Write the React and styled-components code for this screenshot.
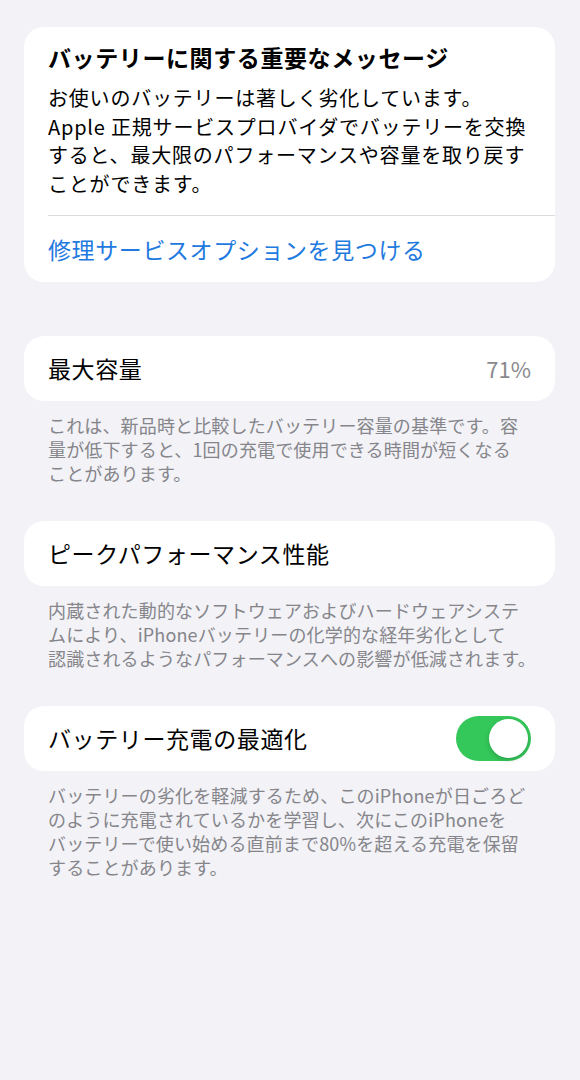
import React from 'react';
import styled, { createGlobalStyle } from 'styled-components';

const GlobalStyle = createGlobalStyle`
  html, body {
    margin: 0;
    padding: 0;
    background: #f2f2f7;
  }
  body {
    font-family: "Noto Sans CJK JP", "Noto Sans", sans-serif;
    -webkit-font-smoothing: antialiased;
  }
`;

const Page = styled.div`
  width: 580px;
  min-height: 1080px;
  box-sizing: border-box;
  padding: 27px 25px 0 24px;
  background: #f2f2f7;
`;

const Card = styled.div`
  background: #ffffff;
  border-radius: 20px;
  overflow: hidden;
  margin-top: ${p => p.$top || 0}px;
`;

const Notice = styled.div`
  padding: 15px 24px 16px 24px;
`;

const NoticeTitle = styled.div`
  font-size: 23px;
  font-weight: 700;
  line-height: 30px;
  letter-spacing: 0.6px;
  color: #000;
  white-space: nowrap;
`;

const NoticeBody = styled.div`
  margin-top: 12px;
  font-size: 20px;
  line-height: 28.7px;
  letter-spacing: 0.8px;
  color: #000;
  white-space: nowrap;
`;

const Divider = styled.div`
  height: 1px;
  background: #dcdce0;
  margin-left: 24px;
`;

const LinkRow = styled.div`
  height: 66px;
  display: flex;
  align-items: center;
  padding: 0 24px;
  font-size: 23px;
  letter-spacing: 0.6px;
  color: #1f7ae0;
`;

const Row = styled.div`
  height: 65px;
  display: flex;
  align-items: center;
  justify-content: space-between;
  padding: 0 24px;
`;

const Label = styled.span`
  font-size: 23px;
  letter-spacing: 0.6px;
  color: #000;
`;

const Value = styled.span`
  font-size: 22px;
  color: #8a8a8e;
`;

const Footnote = styled.div`
  padding: 12px 24px 0 24px;
  margin-bottom: 35px;
  font-size: 18px;
  line-height: 24.3px;
  letter-spacing: 0.15px;
  color: #85858a;
  white-space: nowrap;
`;

const Toggle = styled.div`
  width: 75px;
  height: 45px;
  border-radius: 23px;
  background: ${p => (p.$on ? '#34c759' : '#e9e9eb')};
  display: flex;
  align-items: center;
  justify-content: ${p => (p.$on ? 'flex-end' : 'flex-start')};
  padding: 0 3px;
  box-sizing: border-box;
`;

const Knob = styled.div`
  width: 39px;
  height: 39px;
  border-radius: 50%;
  background: #fff;
  box-shadow: 0 2px 5px rgba(0, 0, 0, 0.18);
`;

export default function App() {
  return (
    <Page>
      <GlobalStyle />
      <Card>
        <Notice>
          <NoticeTitle>バッテリーに関する重要なメッセージ</NoticeTitle>
          <NoticeBody>
            お使いのバッテリーは著しく劣化しています。<br />
            Apple 正規サービスプロバイダでバッテリーを交換<br />
            すると、最大限のパフォーマンスや容量を取り戻す<br />
            ことができます。
          </NoticeBody>
        </Notice>
        <Divider />
        <LinkRow>修理サービスオプションを見つける</LinkRow>
      </Card>

      <Card $top={54}>
        <Row>
          <Label>最大容量</Label>
          <Value>71%</Value>
        </Row>
      </Card>
      <Footnote>
        これは、新品時と比較したバッテリー容量の基準です。容<br />
        量が低下すると、1回の充電で使用できる時間が短くなる<br />
        ことがあります。
      </Footnote>

      <Card>
        <Row>
          <Label>ピークパフォーマンス性能</Label>
        </Row>
      </Card>
      <Footnote>
        内蔵された動的なソフトウェアおよびハードウェアシステ<br />
        ムにより、iPhoneバッテリーの化学的な経年劣化として<br />
        認識されるようなパフォーマンスへの影響が低減されます。
      </Footnote>

      <Card>
        <Row>
          <Label>バッテリー充電の最適化</Label>
          <Toggle $on>
            <Knob />
          </Toggle>
        </Row>
      </Card>
      <Footnote>
        バッテリーの劣化を軽減するため、このiPhoneが日ごろど<br />
        のように充電されているかを学習し、次にこのiPhoneを<br />
        バッテリーで使い始める直前まで80%を超える充電を保留<br />
        することがあります。
      </Footnote>
    </Page>
  );
}
